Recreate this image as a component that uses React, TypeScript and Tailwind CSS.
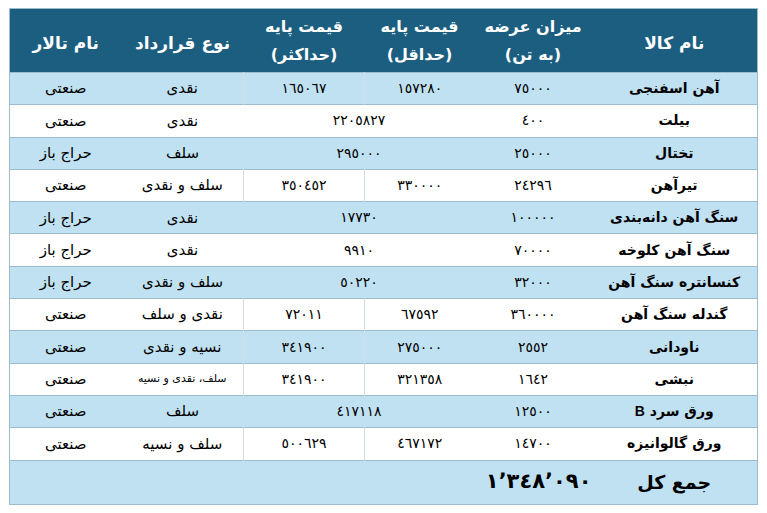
type Row = {
  name: string;
  amount: string;
  min?: string;
  max?: string;
  merged?: string;
  contract: string;
  hall: string;
  smallContract?: boolean;
};

const rows: Row[] = [
  { name: "آهن اسفنجی", amount: "٧٥٠٠٠", min: "١٥٧٢٨٠", max: "١٦٥٠٦٧", contract: "نقدی", hall: "صنعتی" },
  { name: "بیلت", amount: "٤٠٠", merged: "٢٢٠٥٨٢٧", contract: "نقدی", hall: "صنعتی" },
  { name: "تختال", amount: "٢٥٠٠٠", merged: "٢٩٥٠٠٠", contract: "سلف", hall: "حراج باز" },
  { name: "تیرآهن", amount: "٢٤٢٩٦", min: "٣٣٠٠٠٠", max: "٣٥٠٤٥٢", contract: "سلف و نقدی", hall: "صنعتی" },
  { name: "سنگ آهن دانه‌بندی", amount: "١٠٠٠٠٠", merged: "١٧٧٣٠", contract: "نقدی", hall: "حراج باز" },
  { name: "سنگ آهن کلوخه", amount: "٧٠٠٠٠", merged: "٩٩١٠", contract: "نقدی", hall: "حراج باز" },
  { name: "کنسانتره سنگ آهن", amount: "٣٢٠٠٠", merged: "٥٠٢٢٠", contract: "سلف و نقدی", hall: "حراج باز" },
  { name: "گندله سنگ آهن", amount: "٣٦٠٠٠٠", min: "٦٧٥٩٢", max: "٧٢٠١١", contract: "نقدی و سلف", hall: "صنعتی" },
  { name: "ناودانی", amount: "٢٥٥٢", min: "٢٧٥٠٠٠", max: "٣٤١٩٠٠", contract: "نسیه و نقدی", hall: "صنعتی" },
  { name: "نبشی", amount: "١٦٤٢", min: "٣٢١٣٥٨", max: "٣٤١٩٠٠", contract: "سلف، نقدی و نسیه", hall: "صنعتی", smallContract: true },
  { name: "ورق سرد B", amount: "١٢٥٠٠", merged: "٤١٧١١٨", contract: "سلف", hall: "صنعتی" },
  { name: "ورق گالوانیزه", amount: "١٤٧٠٠", min: "٤٦٧١٧٢", max: "٥٠٠٦٢٩", contract: "سلف و نسیه", hall: "صنعتی" },
];

export default function App() {
  return (
    <div className="min-h-[513px] bg-white pl-[9px] pt-[8px] font-['DejaVu_Sans',sans-serif] text-black">
      <table dir="rtl" className="w-[748px] table-fixed border-collapse border border-[#9bbccd]">
        <colgroup>
          <col className="w-[166px]" />
          <col className="w-[117px]" />
          <col className="w-[110px]" />
          <col className="w-[121px]" />
          <col className="w-[122px]" />
          <col className="w-[112px]" />
        </colgroup>
        <thead>
          <tr className="h-[64px] bg-[#1c5e7f] text-[16px] font-bold leading-[28px] text-white">
            <th className="pt-1 text-[17px]">نام کالا</th>
            <th>
              میزان عرضه
              <br />
              (به تن)
            </th>
            <th>
              قیمت پایه
              <br />
              (حداقل)
            </th>
            <th>
              قیمت پایه
              <br />
              (حداکثر)
            </th>
            <th className="pt-1 text-[17px]">نوع قرارداد</th>
            <th className="pt-1 text-[17px]">نام تالار</th>
          </tr>
        </thead>
        <tbody className="text-center text-[15px]">
          {rows.map((r, i) => (
            <tr
              key={r.name}
              className={`h-[32.3px] border-t border-[#9bbccd] ${i % 2 === 0 ? "bg-[#c0e1f2]" : "bg-white"}`}
            >
              <td className="text-[14px] font-bold">
                {r.name.endsWith(" B") ? (
                  <>
                    {r.name.slice(0, -2)} <span className="font-['Liberation_Sans',sans-serif]">B</span>
                  </>
                ) : (
                  r.name
                )}
              </td>
              <td className="text-[14px]">{r.amount}</td>
              {r.merged ? (
                <td colSpan={2} className="text-[14px]">
                  {r.merged}
                </td>
              ) : (
                <>
                  <td className="text-[14px]">{r.min}</td>
                  <td className="border-x border-[#d4dde2] text-[14px]">{r.max}</td>
                </>
              )}
              <td className={r.smallContract ? "text-[11px]" : ""}>{r.contract}</td>
              <td>{r.hall}</td>
            </tr>
          ))}
          <tr className="h-[44px] border-t border-[#9bbccd] bg-[#c0e1f2]">
            <td className="text-[19px] font-bold">جمع کل</td>
            <td className="pl-[18px] text-[21px] font-bold">١٬٣٤٨٬٠٩٠</td>
            <td colSpan={4}></td>
          </tr>
        </tbody>
      </table>
    </div>
  );
}
